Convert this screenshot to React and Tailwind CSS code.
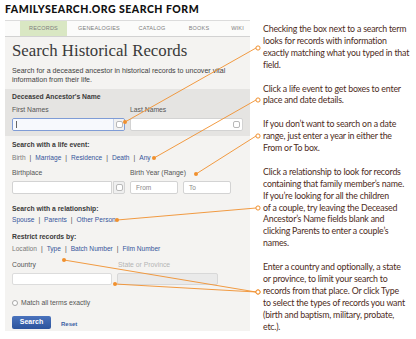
import React from "react";

const sans = { fontFamily: '"Liberation Sans", Arial, sans-serif' };

function Sep() {
  return <span className="mx-[4px] text-[#444]">|</span>;
}

function LinkRow({ items }) {
  return (
    <div className="mt-[5px] flex h-[8px] items-center text-[6.6px] leading-[8px]">
      {items.map((it, i) => (
        <React.Fragment key={it.label}>
          {i > 0 && <Sep />}
          <span className={it.muted ? "text-[#7a7a7a]" : "text-[#34559b]"}>{it.label}</span>
        </React.Fragment>
      ))}
    </div>
  );
}

function Check() {
  return <span className="block h-[7px] w-[7px] rounded-[2px] border border-[#b8b8b8] bg-white"></span>;
}

function Label({ children, className = "" }) {
  return <div className={`h-[8px] text-[6.8px] leading-[8px] text-[#555] ${className}`}>{children}</div>;
}

function Heading({ children, className = "" }) {
  return <div className={`h-[8px] text-[6.8px] font-bold leading-[8px] text-[#3a3a3a] ${className}`}>{children}</div>;
}

function SearchForm() {
  const tabs = [
    { label: "RECORDS", w: "w-[47px]", active: true },
    { label: "GENEALOGIES", w: "w-[64px]" },
    { label: "CATALOG", w: "w-[42px]" },
    { label: "BOOKS", w: "w-[52px]" },
    { label: "WIKI", w: "w-[25px]" },
  ];
  return (
    <div className="ml-[5px] h-[311px] w-[245px] border-t border-[#dcdcdc] bg-[#f4f3f1]" style={sans}>
      {/* tabs */}
      <div className="flex h-[16px] border-b border-[#d2d2d2] bg-[#fbfbfa] pl-[15px]">
        {tabs.map((t) => (
          <div
            key={t.label}
            className={`${t.w} flex items-center justify-center text-[5.5px] tracking-[0.2px] text-[#7d7d7d] ${t.active ? "bg-[#d9e7c3]" : ""}`}
          >
            {t.label}
          </div>
        ))}
      </div>

      <div className="pl-[7px]">
        <div className="mt-[4px] h-[20px] text-[16.8px] leading-[20px] text-[#3a3a3a]" style={{ fontFamily: '"Liberation Serif", serif' }}>
          Search Historical Records
        </div>
        <div className="mt-[6px] text-[7.1px] leading-[8.5px] text-[#3f3f3f]">
          Search for a deceased ancestor in historical records to uncover vital
          <br />
          information from their life.
        </div>
      </div>

      {/* name section */}
      <div className="mt-[5px] h-[47px] bg-[#e5e4e2] pl-[7px] pt-[4px]">
        <Heading>Deceased Ancestor's Name</Heading>
        <div className="mt-[5px] flex">
          <Label className="w-[118px]">First Names</Label>
          <Label>Last Names</Label>
        </div>
        <div className="mt-[4px] flex">
          <div className="flex h-[13px] w-[113px] overflow-hidden rounded-[2px] border border-[#7f9cd6]">
            <div className="flex flex-1 items-center bg-[#f7f9fd] pl-[3px]">
              <span className="h-[7px] w-px bg-[#666]"></span>
            </div>
            <div className="flex w-[11px] items-center justify-center border-l border-[#c9d3e6] bg-[#f1f1f1]">
              <Check />
            </div>
          </div>
          <div className="ml-[5px] flex h-[13px] w-[113px] items-center justify-end rounded-[2px] border border-[#d3d3d3] bg-white pr-[2px]">
            <Check />
          </div>
        </div>
      </div>

      <div className="pl-[7px]">
        <Heading className="mt-[5px]">Search with a life event:</Heading>
        <LinkRow
          items={[
            { label: "Birth", muted: true },
            { label: "Marriage" },
            { label: "Residence" },
            { label: "Death" },
            { label: "Any" },
          ]}
        />

        <div className="mt-[7px] flex">
          <Label className="w-[118px]">Birthplace</Label>
          <Label>Birth Year (Range)</Label>
        </div>
        <div className="mt-[4px] flex">
          <div className="h-[13px] w-[100px] rounded-l-[2px] border border-[#d3d3d3] bg-white"></div>
          <div className="ml-px flex h-[13px] w-[12px] items-center justify-center rounded-r-[2px] border border-[#d3d3d3] bg-[#efefef]">
            <Check />
          </div>
          <div className="ml-[5px] flex h-[13px] w-[48px] items-center rounded-[2px] border border-[#d3d3d3] bg-white pl-[5px] text-[6.5px] text-[#888]">
            From
          </div>
          <div className="ml-[5px] flex h-[13px] w-[48px] items-center rounded-[2px] border border-[#d3d3d3] bg-white pl-[5px] text-[6.5px] text-[#888]">
            To
          </div>
        </div>

        <Heading className="mt-[11px]">Search with a relationship:</Heading>
        <div className="-mt-[2px]">
          <LinkRow items={[{ label: "Spouse" }, { label: "Parents" }, { label: "Other Person" }]} />
        </div>

        <Heading className="mt-[9px]">Restrict records by:</Heading>
        <div className="-mt-[1px]">
          <LinkRow
            items={[
              { label: "Location", muted: true },
              { label: "Type" },
              { label: "Batch Number" },
              { label: "Film Number" },
            ]}
          />
        </div>

        <div className="mt-[8px] flex">
          <Label className="w-[106px]">Country</Label>
          <Label className="text-[#b5b5b5]">State or Province</Label>
        </div>
        <div className="mt-[4px] flex">
          <div className="h-[12px] w-[100px] rounded-[2px] border border-[#dcdcdc] bg-white"></div>
          <div className="ml-[5px] h-[12px] w-[101px] rounded-[2px] border border-[#d8d8d8] bg-[#eaeaea]"></div>
        </div>

        <div className="mt-[14px] flex h-[8px] items-center text-[6.8px] text-[#555]">
          <span className="mr-[3px] block h-[6px] w-[6px] rounded-full border border-[#a8a8a8] bg-white"></span>
          Match all terms exactly
        </div>

        <div className="mt-[9px] flex items-center">
          <div className="flex h-[13px] w-[39px] items-center justify-center rounded-[2px] bg-gradient-to-b from-[#4a73bd] to-[#2c539c] text-[7px] font-bold text-white">
            Search
          </div>
          <span className="ml-[10px] mt-[4px] text-[6px] font-bold text-[#3a5ea3]">Reset</span>
        </div>
      </div>
    </div>
  );
}

const notes = [
  [
    "Checking the box next to a search term",
    "looks for records with information",
    "exactly matching what you typed in that",
    "field.",
  ],
  ["Click a life event to get boxes to enter", "place and date details."],
  ["If you don\u2019t want to search on a date", "range, just enter a year in either the", "From or To box."],
  [
    "Click a relationship to look for records",
    "containing that family member\u2019s name.",
    "If you\u2019re looking for all the children",
    "of a couple, try leaving the Deceased",
    "Ancestor\u2019s Name fields blank and",
    "clicking Parents to enter a couple\u2019s",
    "names.",
  ],
  [
    "Enter a country and optionally, a state",
    "or province, to limit your search to",
    "records from that place. Or click Type",
    "to select the types of records you want",
    "(birth and baptism, military, probate,",
    "etc.).",
  ],
];

// leader lines: [dotX, dotY, circleX, circleY]
const leaders = [
  [125, 122, 258, 48],
  [154, 158, 258, 100],
  [196, 174, 258, 136],
  [117, 220, 258, 208],
  [64, 260, 258, 292],
  [115, 284, 258, 292],
];

export default function App() {
  return (
    <div className="relative h-[339px] w-[416px] overflow-hidden bg-white">
      <h1
        className="flex h-[20px] items-center pl-[5px] text-[10.5px] font-black tracking-[0.5px] text-[#111]"
        style={{ fontFamily: "Lato, sans-serif" }}
      >
        FAMILYSEARCH.ORG SEARCH FORM
      </h1>
      <div className="flex">
        <SearchForm />
        <div
          className="ml-[13px] mt-[3px] text-[8.8px] leading-[11.9px] tracking-[-0.2px] text-[#4d2b22]"
          style={{ fontFamily: "Lato, sans-serif" }}
        >
          {notes.map((p, i) => (
            <div key={i} className="mb-[11.9px]">
              {p.map((line) => (
                <div key={line} className="whitespace-nowrap">
                  {line}
                </div>
              ))}
            </div>
          ))}
        </div>
      </div>

      {/* annotation leader lines */}
      <svg className="pointer-events-none absolute left-0 top-0" width="416" height="339">
        {leaders.map(([x1, y1, x2, y2], i) => (
          <g key={i}>
            <line x1={x1} y1={y1} x2={x2 - 2} y2={y2} stroke="#f0902e" strokeWidth="0.9" />
            <circle cx={x1} cy={y1} r="2" fill="#f0902e" />
            <circle cx={x2} cy={y2} r="2.1" fill="white" stroke="#f0902e" strokeWidth="1" />
          </g>
        ))}
      </svg>
    </div>
  );
}
